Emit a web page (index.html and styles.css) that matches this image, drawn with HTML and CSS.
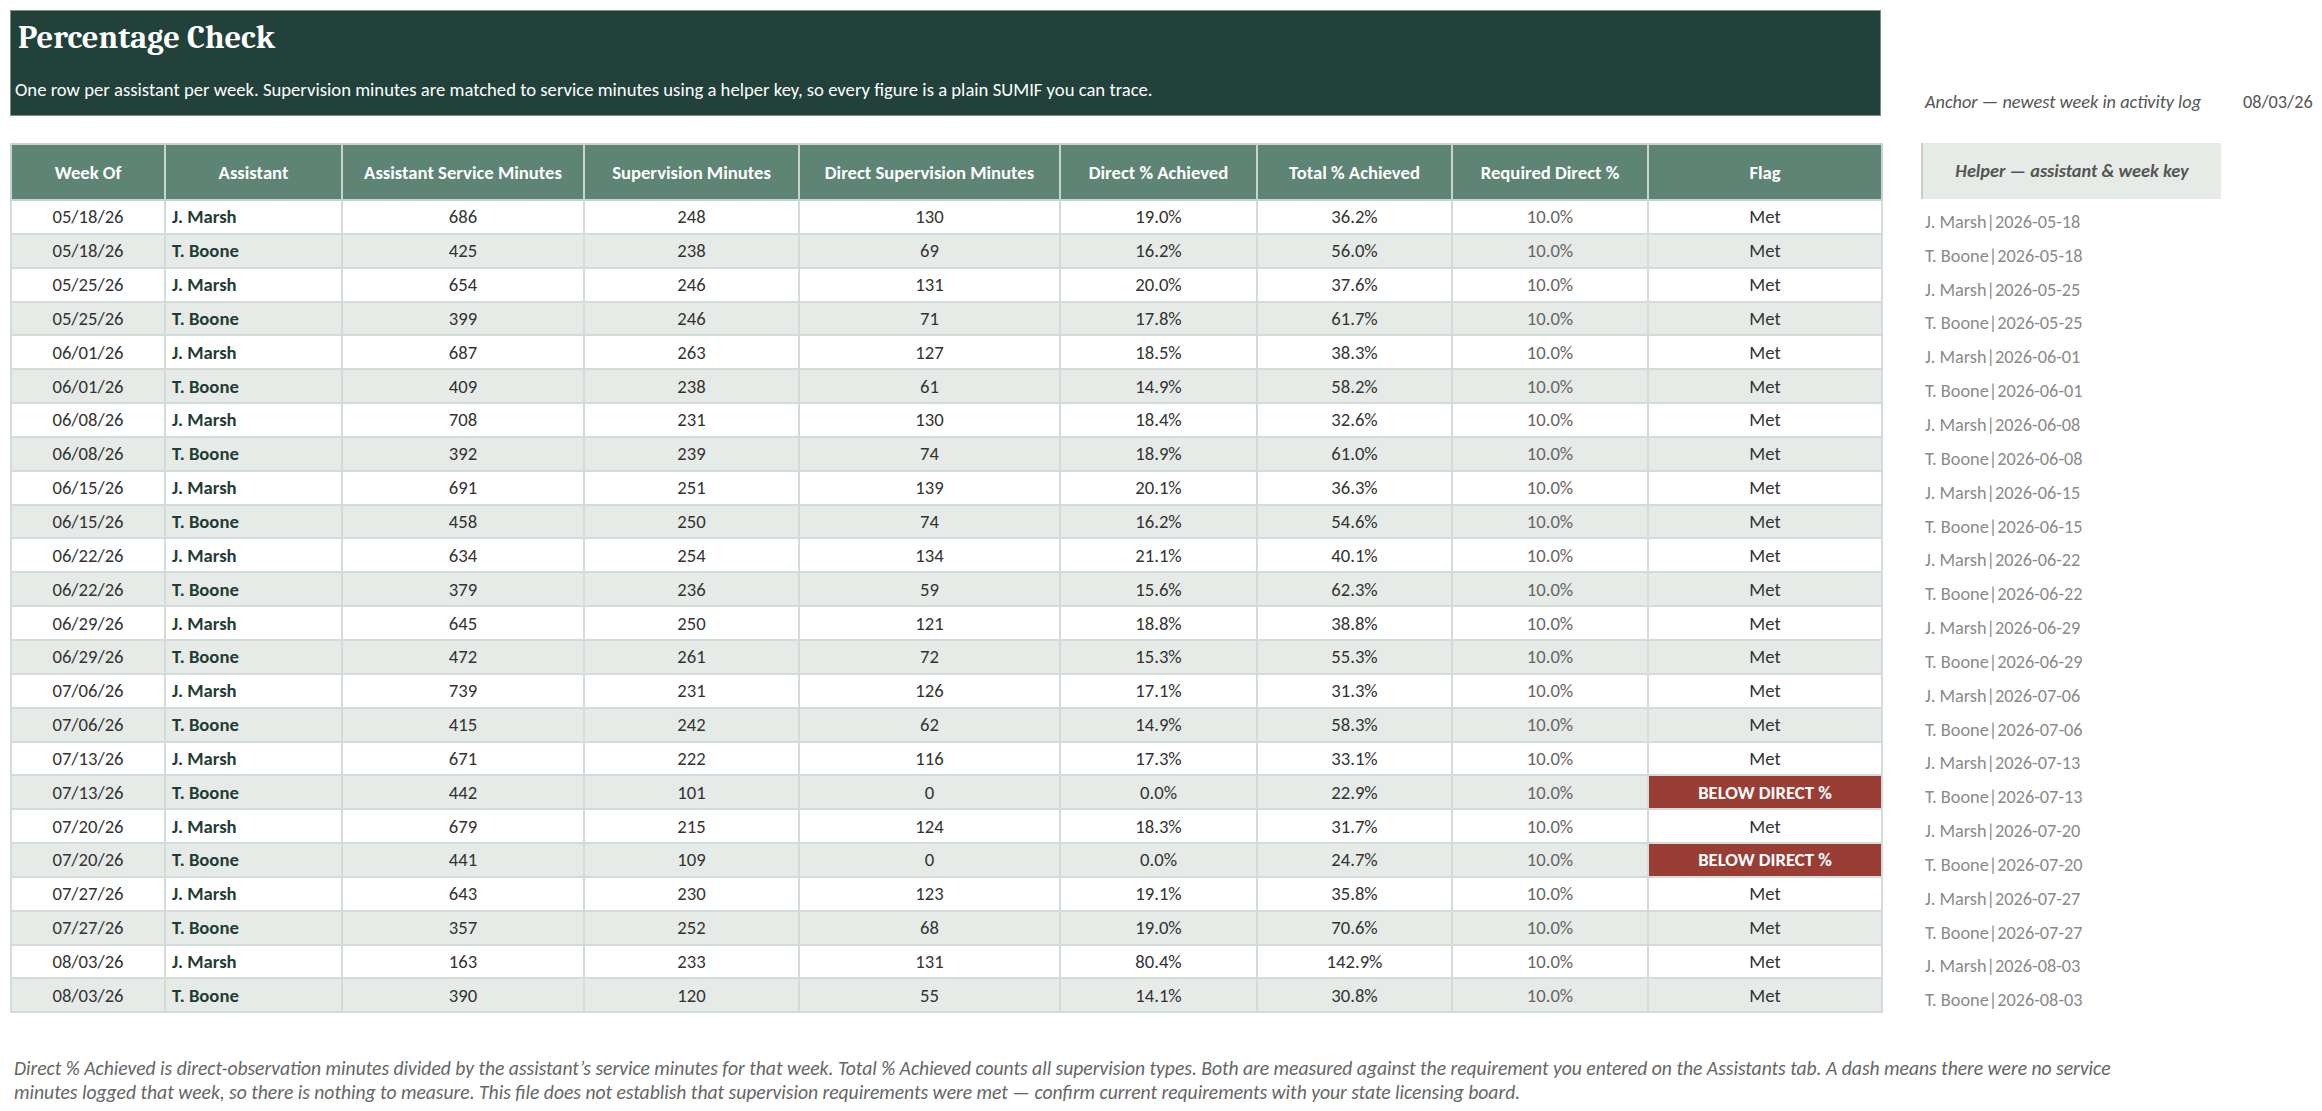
FILE: index.html
```html
<!DOCTYPE html>
<html lang="en">
<head>
<meta charset="utf-8">
<title>Percentage Check</title>
<link rel="stylesheet" href="styles.css">
</head>
<body>
<div class="sheet">
  <header class="banner">
    <h1 class="banner-title">Percentage Check</h1>
    <p class="banner-sub">One row per assistant per week. Supervision minutes are matched to service minutes using a helper key, so every figure is a plain SUMIF you can trace.</p>
  </header>

  <div class="anchor">
    <span class="anchor-label">Anchor — newest week in activity log</span>
    <span class="anchor-date">08/03/26</span>
  </div>

  <table class="grid">
    <colgroup>
      <col class="c-week"><col class="c-asst"><col class="c-svc"><col class="c-sup"><col class="c-dsup"><col class="c-dpct"><col class="c-tpct"><col class="c-req"><col class="c-flag">
    </colgroup>
    <thead>
      <tr>
        <th>Week Of</th><th>Assistant</th><th>Assistant Service Minutes</th><th>Supervision Minutes</th><th>Direct Supervision Minutes</th><th>Direct % Achieved</th><th>Total % Achieved</th><th>Required Direct %</th><th>Flag</th>
      </tr>
    </thead>
    <tbody id="rows"></tbody>
  </table>

  <div class="helper">
    <div class="helper-head">Helper — assistant &amp; week key</div>
    <ul class="helper-list" id="keys"></ul>
  </div>

  <p class="note">Direct % Achieved is direct-observation minutes divided by the assistant’s service minutes for that week. Total % Achieved counts all supervision types. Both are measured against the requirement you entered on the Assistants tab. A dash means there were no service<br>minutes logged that week, so there is nothing to measure. This file does not establish that supervision requirements were met — confirm current requirements with your state licensing board.</p>
</div>
<script src="app.js"></script>
</body>
</html>
```
FILE: app.js
```js
var data = [
  ["05/18/26","J. Marsh",686,248,130,"19.0%","36.2%"],
  ["05/18/26","T. Boone",425,238,69,"16.2%","56.0%"],
  ["05/25/26","J. Marsh",654,246,131,"20.0%","37.6%"],
  ["05/25/26","T. Boone",399,246,71,"17.8%","61.7%"],
  ["06/01/26","J. Marsh",687,263,127,"18.5%","38.3%"],
  ["06/01/26","T. Boone",409,238,61,"14.9%","58.2%"],
  ["06/08/26","J. Marsh",708,231,130,"18.4%","32.6%"],
  ["06/08/26","T. Boone",392,239,74,"18.9%","61.0%"],
  ["06/15/26","J. Marsh",691,251,139,"20.1%","36.3%"],
  ["06/15/26","T. Boone",458,250,74,"16.2%","54.6%"],
  ["06/22/26","J. Marsh",634,254,134,"21.1%","40.1%"],
  ["06/22/26","T. Boone",379,236,59,"15.6%","62.3%"],
  ["06/29/26","J. Marsh",645,250,121,"18.8%","38.8%"],
  ["06/29/26","T. Boone",472,261,72,"15.3%","55.3%"],
  ["07/06/26","J. Marsh",739,231,126,"17.1%","31.3%"],
  ["07/06/26","T. Boone",415,242,62,"14.9%","58.3%"],
  ["07/13/26","J. Marsh",671,222,116,"17.3%","33.1%"],
  ["07/13/26","T. Boone",442,101,0,"0.0%","22.9%"],
  ["07/20/26","J. Marsh",679,215,124,"18.3%","31.7%"],
  ["07/20/26","T. Boone",441,109,0,"0.0%","24.7%"],
  ["07/27/26","J. Marsh",643,230,123,"19.1%","35.8%"],
  ["07/27/26","T. Boone",357,252,68,"19.0%","70.6%"],
  ["08/03/26","J. Marsh",163,233,131,"80.4%","142.9%"],
  ["08/03/26","T. Boone",390,120,55,"14.1%","30.8%"]
];
var rows = document.getElementById("rows");
var keys = document.getElementById("keys");
data.forEach(function (d) {
  var below = d[4] === 0;
  var tr = document.createElement("tr");
  tr.innerHTML =
    '<td>' + d[0] + '</td>' +
    '<td class="name">' + d[1] + '</td>' +
    '<td>' + d[2] + '</td>' +
    '<td>' + d[3] + '</td>' +
    '<td>' + d[4] + '</td>' +
    '<td>' + d[5] + '</td>' +
    '<td>' + d[6] + '</td>' +
    '<td class="req">10.0%</td>' +
    (below ? '<td class="flag flag-bad">BELOW DIRECT %</td>' : '<td class="flag">Met</td>');
  rows.appendChild(tr);
  var p = d[0].split("/");
  var li = document.createElement("li");
  li.textContent = d[1] + "|20" + p[2] + "-" + p[0] + "-" + p[1];
  keys.appendChild(li);
});
```
FILE: styles.css
```css
* { box-sizing: border-box; }
html, body { margin: 0; padding: 0; background: #ffffff; }
body {
  font-family: Carlito, Calibri, "Liberation Sans Narrow", "Liberation Sans", sans-serif;
  color: #333333;
}
.sheet {
  display: grid;
  grid-template-columns: 1871px 300px 1fr;
  grid-template-rows: 106px 27px auto auto;
  column-gap: 40px;
  padding: 10px 0 0 10px;
}
.banner {
  grid-column: 1; grid-row: 1;
  background: #21413a;
  border: 1px solid #7d8f88;
  padding: 0 0 0 7px;
  display: flex;
  flex-direction: column;
}
.banner-title {
  margin: 6px 0 0 0;
  font-family: Caladea, Cambria, Georgia, "DejaVu Serif", "Liberation Serif", serif;
  font-weight: bold;
  font-size: 32.5px;
  line-height: 42px;
  color: #ffffff;
}
.banner-sub {
  margin: 20px 0 0 -3px;
  font-size: 18.67px;
  line-height: 22px;
  color: #ffffff;
}
.anchor {
  grid-column: 2 / 4; grid-row: 1;
  align-self: end;
  display: flex;
  align-items: baseline;
  padding: 0 0 3px 4px;
  font-size: 18.3px;
  color: #555555;
}
.anchor-label { font-style: italic; width: 318px; }
.anchor-date { color: #555555; }
.grid {
  grid-column: 1; grid-row: 3;
  border-collapse: collapse;
  table-layout: fixed;
  width: 1871px;
  font-size: 18.67px;
  border: 2px solid #d3dcd8;
}
.c-week { width: 154px; }
.c-asst { width: 177px; }
.c-svc { width: 242px; }
.c-sup { width: 215px; }
.c-dsup { width: 261px; }
.c-dpct { width: 197px; }
.c-tpct { width: 195px; }
.c-req { width: 196px; }
.c-flag { width: 234px; }
.grid th {
  height: 56px;
  background: #5e8475;
  color: #ffffff;
  font-weight: bold;
  text-align: center;
  border: 2px solid #c9d4cf;
  padding: 0 4px;
}
.grid td {
  height: 33.85px;
  padding: 0 6px;
  text-align: center;
  border: 2px solid #d3dcd8;
  color: #333333;
  white-space: nowrap;
}
.grid tbody tr:nth-child(even) td { background: #e7ebe8; }
.grid td.name {
  text-align: left;
  font-weight: bold;
  color: #1f3d35;
}
.grid td.req { color: #666666; }
.grid td.flag { color: #333333; }
.grid tbody tr td.flag-bad {
  background: #9a3e35;
  color: #ffffff;
  font-weight: bold;
}
.helper {
  grid-column: 2; grid-row: 3;
}
.helper-head {
  height: 56px;
  background: #e7ebe8;
  border-left: 2px solid #c3d1ca;
  display: flex;
  align-items: center;
  justify-content: center;
  font-size: 18.3px;
  font-weight: bold;
  font-style: italic;
  color: #555555;
}
.helper-list {
  list-style: none;
  margin: 0;
  padding: 0;
}
.helper-list li {
  height: 33.85px;
  display: flex;
  align-items: center;
  padding: 12px 0 0 4px;
  font-size: 18.3px;
  color: #8a8a8a;
  white-space: nowrap;
}
.note {
  grid-column: 1 / 4; grid-row: 4;
  margin: 44px 0 0 4px;
  font-size: 19.6px;
  line-height: 23.7px;
  font-style: italic;
  color: #666666;
}
```
